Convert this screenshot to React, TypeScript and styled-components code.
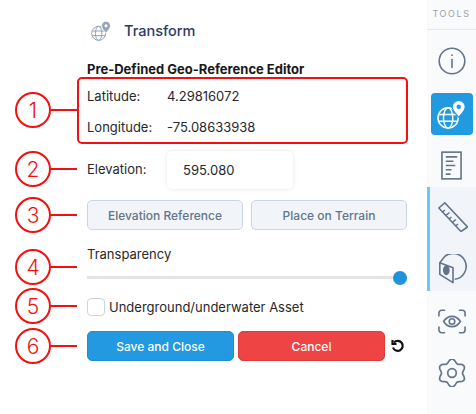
import React from 'react'
import styled, { createGlobalStyle } from 'styled-components'

const GlobalStyle = createGlobalStyle`
  html, body {
    margin: 0;
    padding: 0;
    background: #fff;
    font-family: Inter, "Liberation Sans", sans-serif;
  }
`

const Page = styled.div`
  position: relative;
  display: flex;
  width: 476px;
  height: 414px;
  overflow: hidden;
  background: #fff;
`

const Main = styled.main`
  flex: 1;
  min-width: 0;
  display: flex;
  flex-direction: column;
  padding: 20px 20px 0 87px;
  color: #27272a;
  font-size: 13px;
`

const TitleRow = styled.div`
  display: flex;
  align-items: center;
  gap: 13px;
  margin-left: 4px;
  height: 22px;
`

const Title = styled.h1`
  margin: 0;
  font-size: 14.5px;
  line-height: 22px;
  font-weight: 500;
  color: #2d3a66;
`

const Heading = styled.h2`
  margin: 17px 0 1px;
  font-size: 13px;
  line-height: 20px;
  font-weight: 700;
  color: #18181b;
`

const CoordRow = styled.div`
  display: flex;
  align-items: center;
  height: 31px;
`

const FieldLabel = styled.span`
  width: 80px;
  flex-shrink: 0;
`

const ElevationLabel = styled(FieldLabel)`
  padding-bottom: 3px;
`

const ElevationRow = styled.div`
  display: flex;
  align-items: center;
  margin-top: 9px;
`

const ElevationValue = styled.div`
  width: 126px;
  height: 38px;
  box-sizing: border-box;
  display: flex;
  align-items: center;
  padding-left: 16px;
  border-radius: 5px;
  background: #fff;
  box-shadow: 0 0 4px rgba(148, 163, 184, 0.25);
  font-size: 13px;
`

const ButtonRow = styled.div`
  display: flex;
  gap: 8px;
  margin-top: 11px;
`

const GhostButton = styled.button`
  flex: 1;
  height: 30px;
  padding: 0;
  border: 1px solid #cbd5e1;
  border-radius: 5px;
  background: #f1f5f9;
  color: #64748b;
  font: 500 12px Inter, sans-serif;
`

const SliderLabel = styled.div`
  margin-top: 15px;
  line-height: 18px;
`

const Slider = styled.div`
  position: relative;
  height: 3px;
  margin-top: 13px;
  background: #e4e4e7;
`

const Thumb = styled.span`
  position: absolute;
  right: 0;
  top: -5px;
  width: 14px;
  height: 14px;
  border-radius: 50%;
  background: #1f93dc;
`

const CheckRow = styled.label`
  display: flex;
  align-items: center;
  gap: 4px;
  margin-top: 19px;
  height: 18px;
`

const CheckBox = styled.span`
  width: 18px;
  height: 18px;
  box-sizing: border-box;
  border: 1px solid #cbd5e1;
  border-radius: 4px;
  background: #fff;
`

const ActionRow = styled.div`
  display: flex;
  align-items: center;
  gap: 4px;
  margin-top: 15px;
`

const ActionButton = styled.button<{ $tone: string; $edge: string }>`
  width: 147px;
  height: 30px;
  padding: 0;
  border: 1px solid ${p => p.$edge};
  border-radius: 5px;
  background: ${p => p.$tone};
  color: #fff;
  font: 500 12px Inter, sans-serif;
`

const UndoIcon = styled.svg`
  margin-left: 2px;
  margin-bottom: 1px;
  flex-shrink: 0;
`

const Sidebar = styled.aside`
  width: 49px;
  flex-shrink: 0;
  background: #f8fafc;
  display: flex;
  flex-direction: column;
`

const SidebarTitle = styled.div`
  height: 30px;
  box-sizing: border-box;
  padding-top: 8px;
  border-bottom: 1px solid #e2e8f0;
  margin-bottom: 5px;
  text-align: center;
  font-size: 9px;
  line-height: 12px;
  letter-spacing: 1.6px;
  color: #a1a1aa;
`

const Tool = styled.div<{ $height: number }>`
  height: ${p => p.$height}px;
  display: flex;
  align-items: center;
  justify-content: center;
  color: #64748b;
`

const ActiveTile = styled.div`
  width: 42px;
  height: 42px;
  border-radius: 4px;
  background: #229ae0;
  display: flex;
  align-items: center;
  justify-content: center;
`

const ToolGroup = styled.div`
  height: 104px;
  box-sizing: border-box;
  border-left: 3px solid #6dc6fd;
  background: #f1f5f9;
  display: flex;
  flex-direction: column;
`

const Marker = styled.div<{ $top: number }>`
  position: absolute;
  left: 15px;
  top: ${p => p.$top - 18}px;
  width: 36px;
  height: 36px;
  box-sizing: border-box;
  border: 2px solid #f50f0f;
  border-radius: 50%;
  background: #fff;
  color: #f50f0f;
  display: flex;
  align-items: center;
  justify-content: center;
  font-size: 21px;
  font-weight: 300;

  &::after {
    content: '';
    position: absolute;
    left: 34px;
    top: 15px;
    width: 26px;
    height: 2px;
    background: #f50f0f;
  }
`

const Highlight = styled.div`
  position: absolute;
  left: 77px;
  top: 77px;
  width: 331px;
  height: 67px;
  box-sizing: border-box;
  border: 2px solid #f50f0f;
  border-radius: 5px;
`

const Pin = styled.span<{ $hole: string; $color: string }>`
  display: flex;
  color: ${p => p.$color};
  --pin-hole: ${p => p.$hole};
`

const GlobePin = ({ size = 29 }: { size?: number }) => (
  <svg width={size} height={size} viewBox="0 0 30 30" fill="none" stroke="currentColor" strokeWidth="1.5">
    <circle cx="11.5" cy="18.5" r="10.5" />
    <ellipse cx="11.5" cy="18.5" rx="4.8" ry="10.5" />
    <path d="M2 15h19M2 22h19" />
    <path
      d="M22.5 0.500c-3.700 0-6.700 2.900-6.700 6.500 0 4 4.300 8.100 6.700 10.800 2.400-2.700 6.700-6.800 6.700-10.800 0-3.600-3-6.500-6.700-6.500z"
      fill="currentColor"
      stroke="var(--pin-hole)"
      strokeWidth="1.2"
    />
    <circle cx="22.500" cy="7" r="2.300" fill="var(--pin-hole)" stroke="none" />
  </svg>
)

const InfoIcon = () => (
  <svg width="28" height="28" viewBox="0 0 28 28" fill="none" stroke="currentColor" strokeWidth="1.6" strokeLinecap="round">
    <circle cx="14" cy="14" r="12.800" />
    <path d="M14 12.500v8" />
    <circle cx="14" cy="8.200" r="0.900" fill="currentColor" stroke="none" />
  </svg>
)

const DocSvg = styled.svg`
  margin-top: 3px;
`

const DocIcon = () => (
  <DocSvg width="21" height="29" viewBox="0 0 22 30" fill="none" stroke="currentColor" strokeWidth="1.7">
    <rect x="1" y="1" width="20" height="28" />
    <path d="M5 6h12M5 10.500h8M5 15h10M5 19.500h6M5 24h5" />
  </DocSvg>
)

const RulerIcon = () => (
  <svg width="30" height="30" viewBox="0 0 30 30" fill="none" stroke="currentColor" strokeWidth="1.6" strokeLinejoin="round">
    <path d="M0.800 6 6.800 0.800 29.500 25 23 29.500z" />
    <path d="M4.500 10l2.400-2M7.800 13.500l3.600-3M11 17l2.400-2M14.300 20.500l3.600-3M17.600 24l2.400-2" />
  </svg>
)

const CubeIcon = () => (
  <svg width="28" height="30" viewBox="0 0 28 30" fill="none" stroke="currentColor" strokeWidth="1.6" strokeLinejoin="round">
    <path d="M0.800 8.700 14 13.700v15L0.800 20.300z" />
    <path d="M0.800 8.700 5.700 2.500A13 13 0 1 1 15.700 25.300" />
    <ellipse cx="7.300" cy="16.300" rx="3.300" ry="5" fill="currentColor" stroke="none" />
  </svg>
)

const EyeScanIcon = () => (
  <svg width="28" height="25" viewBox="0 0 30 26" fill="none" stroke="currentColor" strokeWidth="1.7" strokeLinecap="round">
    <path d="M1 7V4a3 3 0 0 1 3-3h3M23 1h3a3 3 0 0 1 3 3v3M29 19v3a3 3 0 0 1-3 3h-3M7 25H4a3 3 0 0 1-3-3v-3" />
    <path d="M6 13c2.200-3.600 5.200-5.500 9-5.500s6.800 1.900 9 5.500c-2.200 3.600-5.200 5.500-9 5.500S8.200 16.600 6 13z" />
    <circle cx="15" cy="13" r="3" />
  </svg>
)

// six rounded lobes, first one pointing straight up
const gearPath = Array.from({ length: 120 }, (_, i) => {
  const a = (i / 120) * Math.PI * 2
  const r = 12.2 + 1.7 * Math.cos(6 * a)
  const x = 14 + r * Math.sin(a)
  const y = 14 - r * Math.cos(a)
  return `${i === 0 ? 'M' : 'L'}${x.toFixed(2)} ${y.toFixed(2)}`
}).join('') + 'z'

const GearIcon = () => (
  <svg width="28" height="28" viewBox="0 0 28 28" fill="none" stroke="currentColor" strokeWidth="1.7" strokeLinejoin="round">
    <path d={gearPath} />
    <circle cx="14" cy="14" r="4.300" />
  </svg>
)

const markers = [
  { n: 1, top: 110 },
  { n: 2, top: 169 },
  { n: 3, top: 215 },
  { n: 4, top: 267 },
  { n: 5, top: 306 },
  { n: 6, top: 346 },
]

export default function App() {
  return (
    <Page>
      <GlobalStyle />
      <Main>
        <TitleRow>
          <Pin $hole="#fff" $color="#94a3b8">
            <GlobePin size={20} />
          </Pin>
          <Title>Transform</Title>
        </TitleRow>
        <Heading>Pre-Defined Geo-Reference Editor</Heading>
        <CoordRow>
          <FieldLabel>Latitude:</FieldLabel>
          <span>4.29816072</span>
        </CoordRow>
        <CoordRow>
          <FieldLabel>Longitude:</FieldLabel>
          <span>-75.08633938</span>
        </CoordRow>
        <ElevationRow>
          <ElevationLabel>Elevation:</ElevationLabel>
          <ElevationValue>595.080</ElevationValue>
        </ElevationRow>
        <ButtonRow>
          <GhostButton>Elevation Reference</GhostButton>
          <GhostButton>Place on Terrain</GhostButton>
        </ButtonRow>
        <SliderLabel>Transparency</SliderLabel>
        <Slider>
          <Thumb />
        </Slider>
        <CheckRow>
          <CheckBox />
          Underground/underwater Asset
        </CheckRow>
        <ActionRow>
          <ActionButton $tone="#2299e0" $edge="#1f8fd1">Save and Close</ActionButton>
          <ActionButton $tone="#ef4444" $edge="#dc3c3c">Cancel</ActionButton>
          <UndoIcon width="14" height="14" viewBox="0 0 14 14" fill="none" stroke="#111" strokeWidth="2.2">
            <path d="M3 3.500A5 5 0 1 1 2 8.500" />
            <path d="M1.500 1v4h4" />
          </UndoIcon>
        </ActionRow>
      </Main>
      <Sidebar>
        <SidebarTitle>TOOLS</SidebarTitle>
        <Tool $height={52}>
          <InfoIcon />
        </Tool>
        <Tool $height={54}>
          <ActiveTile>
            <Pin $hole="#229ae0" $color="#fff">
              <GlobePin />
            </Pin>
          </ActiveTile>
        </Tool>
        <Tool $height={46}>
          <DocIcon />
        </Tool>
        <ToolGroup>
          <Tool $height={60}>
            <RulerIcon />
          </Tool>
          <Tool $height={44}>
            <CubeIcon />
          </Tool>
        </ToolGroup>
        <Tool $height={60}>
          <EyeScanIcon />
        </Tool>
        <Tool $height={44}>
          <GearIcon />
        </Tool>
      </Sidebar>
      <Highlight />
      {markers.map(m => (
        <Marker key={m.n} $top={m.top}>
          {m.n}
        </Marker>
      ))}
    </Page>
  )
}
